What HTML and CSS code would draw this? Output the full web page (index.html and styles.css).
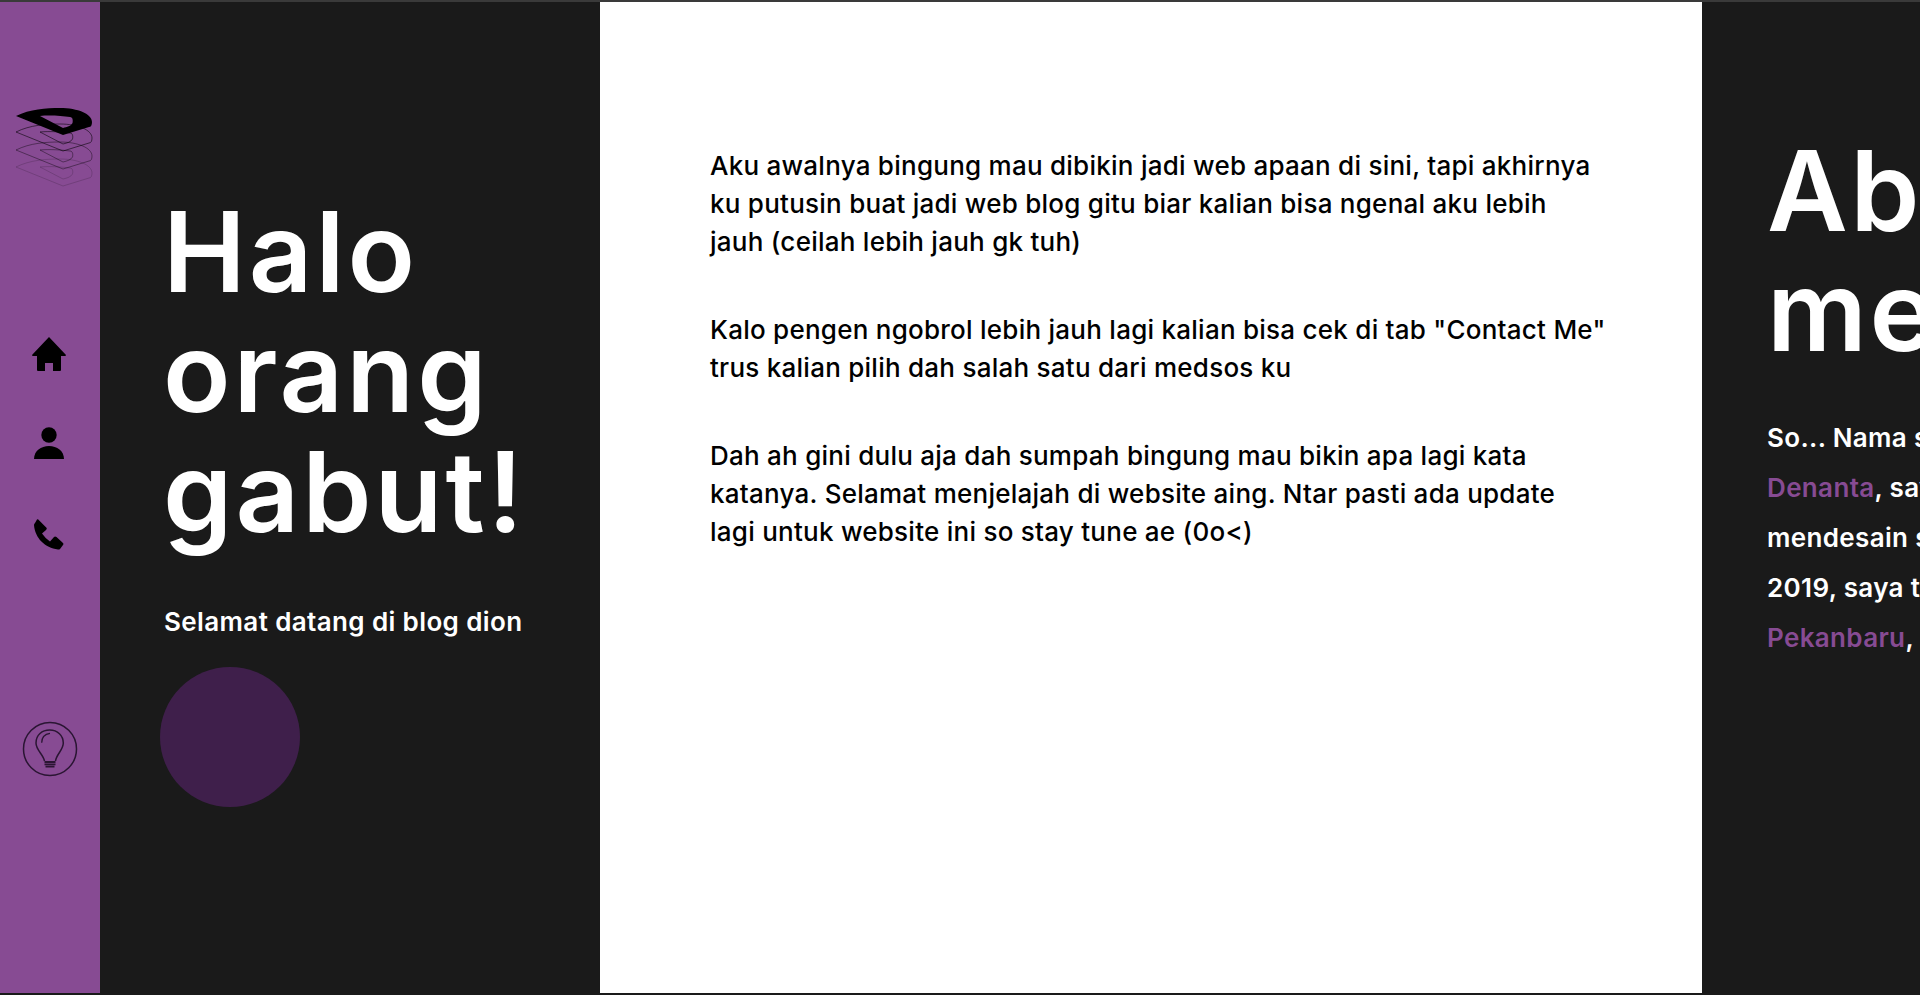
FILE: index.html
```html
<!DOCTYPE html>
<html>
<head>
  <title>Halo orang gabut!</title>
  <link rel="stylesheet" href="styles.css">
</head>
<body>
  <div class="page">
    <nav class="rail">
      <svg class="logo" width="80" height="84" viewBox="0 0 80 84">
        <defs>
          <path id="logo-shape" fill-rule="evenodd" d="M2 10 C16 3 32 2 46 2 C64 2 78 8 78 16 C78 19 77 21 75 21 L49 29 Z M26 10 C36 9 48 10 56 11 C59 11 59 15 58.500 17 C57 20 53 21 49 22 Z"/>
        </defs>
        <use href="#logo-shape" y="51" class="layer-4"/>
        <use href="#logo-shape" y="34" class="layer-3"/>
        <use href="#logo-shape" y="16" class="layer-2"/>
        <use href="#logo-shape" class="layer-1"/>
      </svg>
      <div class="nav-icons">
        <svg width="36" height="36" viewBox="0 0 36 36"><path d="M17 1 L34 19 Q34 20 33 20 L29 20 L29 34 Q29 35 28 35 L21 35 L21 27 L13 27 L13 35 L6 35 Q5 35 5 34 L5 20 L1 20 Q0 20 0 19 Z"/></svg>
        <svg width="36" height="36" viewBox="0 0 36 36"><circle cx="17" cy="9" r="7.700"/><path d="M2 33 C2 25 9 20 17 20 C25 20 32 25 32 33 Z"/></svg>
        <svg width="36" height="36" viewBox="0 0 36 36"><path d="M6 3.300 L14.700 12 Q15 13 14 14 L10 17.500 Q13 22 18 25.500 L22 21 Q23 20 24.500 21 L31 27 Q32 28 31 29 L28 33 Q27.500 33.500 26 33.500 C13 32 3 22 2 9 Q2 8 3 7 L5 3.500 Q5.500 3 6 3.300 Z"/></svg>
      </div>
      <svg class="bulb" width="56" height="56" viewBox="0 0 56 56" fill="none" stroke="#2a1533">
        <circle cx="28" cy="28" r="26.500" stroke-width="1.500"/>
        <path stroke-width="1.500" d="M22.500 40 C21 33 14 29 14 22 C14 14 20 9 27.700 9 C35.500 9 41.300 14.500 41.300 22 C41.300 29 34.500 33 33.500 40"/>
        <path stroke-width="1.300" d="M19.700 21.700 C19.700 16.500 23 13 28 12.300"/>
        <path stroke-width="1.800" d="M22.500 41 H33.500 M22.500 43.300 H33.500 M23.500 45.700 H32.500"/>
      </svg>
    </nav>

    <section class="hero">
      <h1>Halo<br>orang<br>gabut!</h1>
      <p class="hero-sub">Selamat datang di blog dion</p>
      <div class="circle"></div>
    </section>

    <section class="intro">
      <p>Aku awalnya bingung mau dibikin jadi web apaan di sini, tapi akhirnya<br>ku putusin buat jadi web blog gitu biar kalian bisa ngenal aku lebih<br>jauh (ceilah lebih jauh gk tuh)</p>
      <p>Kalo pengen ngobrol lebih jauh lagi kalian bisa cek di tab "Contact Me"<br>trus kalian pilih dah salah satu dari medsos ku</p>
      <p>Dah ah gini dulu aja dah sumpah bingung mau bikin apa lagi kata<br>katanya. Selamat menjelajah di website aing. Ntar pasti ada update<br>lagi untuk website ini so stay tune ae (0o&lt;)</p>
    </section>

    <section class="about">
      <h2>About<br>me</h2>
      <p>So... Nama saya Dion<br><span class="hl">Denanta</span>, saya suka<br>mendesain sejak<br>2019, saya tinggal di<br><span class="hl">Pekanbaru</span>, <span class="hl">Indonesia</span></p>
    </section>
  </div>
</body>
</html>
```

FILE: styles.css
```css
* {
  box-sizing: border-box;
}
html, body {
  margin: 0;
  height: 100%;
  overflow: hidden;
  background: #1a1a1a;
}
body {
  border-top: 2px solid #3a3a3a;
  font-family: "Inter", "Liberation Sans", sans-serif;
}
.page {
  display: flex;
  height: 991px;
  width: 1920px;
  overflow: hidden;
}
.rail {
  flex: 0 0 100px;
  background: #874b93;
  padding-top: 104px;
  display: flex;
  flex-direction: column;
}
.logo {
  margin-left: 14px;
  display: block;
}
.layer-1 { fill: #000; }
.layer-2, .layer-3, .layer-4 {
  fill: none;
  stroke: #000;
}
.layer-2 { opacity: 0.55; }
.layer-3 { opacity: 0.4; }
.layer-4 { opacity: 0.16; }
.nav-icons {
  margin-top: 146px;
  margin-left: 32px;
  display: flex;
  flex-direction: column;
  gap: 54px;
}
.bulb {
  margin-top: 169px;
  margin-left: 22px;
}
.hero {
  flex: 0 0 500px;
  padding: 190px 0 0 64px;
  color: #fff;
}
.hero h1 {
  margin: 0 0 0 -1px;
  font-size: 111px;
  line-height: 120px;
  font-weight: 600;
  letter-spacing: 3px;
}
.hero-sub {
  margin: 50px 0 0;
  font-size: 26px;
  line-height: 40px;
  font-weight: 600;
  letter-spacing: 0.38px;
}
.circle {
  width: 140px;
  height: 140px;
  margin: 25px 0 0 -4px;
  border-radius: 50%;
  background: #3f1f4b;
}
.intro {
  flex: 0 0 1102px;
  background: #fff;
  padding: 145px 0 0 110px;
  color: #000;
  font-size: 26px;
  line-height: 38px;
  font-weight: 500;
  letter-spacing: 0.25px;
}
.intro p {
  margin: 0 0 50px;
  white-space: nowrap;
}
.about {
  flex: 1;
  padding: 129px 0 0 65px;
  color: #fff;
  white-space: nowrap;
}
.about h2 {
  margin: 0;
  font-size: 111px;
  line-height: 120px;
  font-weight: 600;
  letter-spacing: 2.5px;
}
.about p {
  margin: 42px 0 0;
  font-size: 26px;
  line-height: 50px;
  font-weight: 600;
  letter-spacing: 0.35px;
}
.hl {
  color: #874b93;
}
```
